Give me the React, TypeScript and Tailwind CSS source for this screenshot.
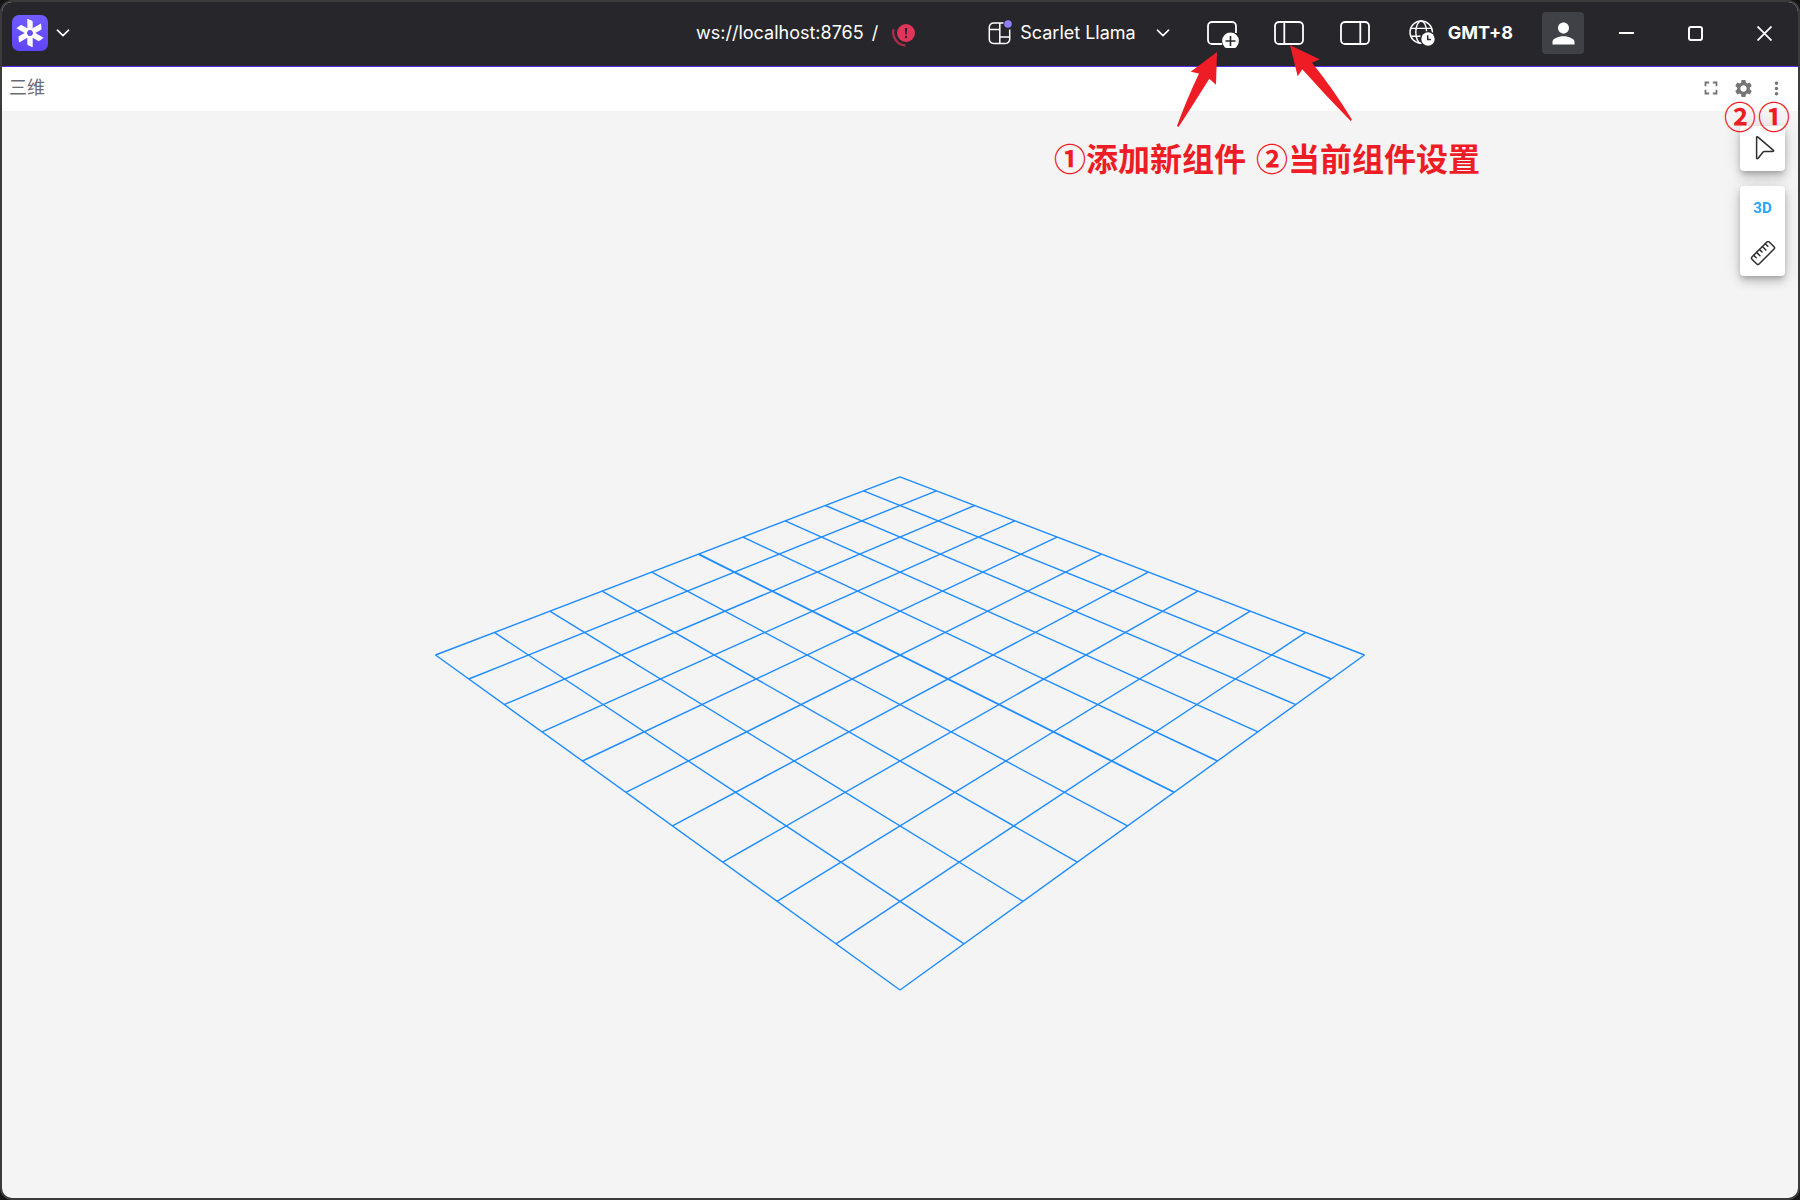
import type { ReactNode } from "react";
import { MdFullscreen, MdMoreVert, MdPerson, MdSettings } from "react-icons/md";

const HALF = 5;

/** Perspective projection of a ground-plane point, relative to the grid's centre. */
function project(a: number, b: number) {
  const u = a + b;
  const v = a - b;
  const depth = 1 - 0.03057 * u;
  return { x: 898 + (46.45 * v) / depth, y: 544 + (23.26 * u) / depth };
}

function GroundGrid() {
  const steps = Array.from({ length: HALF * 2 + 1 }, (_, i) => i - HALF);
  return (
    <svg
      className="absolute inset-0 size-full"
      viewBox="0 0 1796 1087"
      stroke="#1e8cff"
      strokeWidth="1.4"
      aria-hidden="true"
    >
      {steps.map((s) => {
        const p = project(-HALF, s);
        const q = project(HALF, s);
        const r = project(s, -HALF);
        const t = project(s, HALF);
        return (
          <g key={s}>
            <line x1={p.x} y1={p.y} x2={q.x} y2={q.y} strokeWidth={s === 0 ? 1.8 : 1.4} />
            <line x1={r.x} y1={r.y} x2={t.x} y2={t.y} />
          </g>
        );
      })}
    </svg>
  );
}

function Logo() {
  return (
    <svg viewBox="-18 -18 36 36" className="size-9" aria-hidden="true">
      <defs>
        <linearGradient id="logo-fill" x1="0" y1="0" x2="0" y2="1">
          <stop offset="0" stopColor="#6f5cff" />
          <stop offset="1" stopColor="#5f45f7" />
        </linearGradient>
      </defs>
      <rect x="-18" y="-18" width="36" height="36" rx="7" fill="url(#logo-fill)" />
      {[0, 60, 120, 180, 240, 300].map((deg) => (
        <path
          key={deg}
          transform={`rotate(${deg})`}
          d="M-2.7-14.2 1.6-12.4Q2.7-12 2.7-10.8V-4.6L0-2.4-2.7-4.6Z"
          fill="#fff"
        />
      ))}
      <circle r="4.1" fill="none" stroke="#fff" strokeWidth="2.4" />
      <path d="M0-3 2.6-1.5V1.5L0 3-2.6 1.5V-1.5Z" fill="#6650fb" />
    </svg>
  );
}

function Chevron() {
  return (
    <svg viewBox="0 0 14 8" className="h-2 w-3.5" fill="none" stroke="#fff" strokeWidth="1.6" strokeLinecap="round" strokeLinejoin="round" aria-hidden="true">
      <path d="M1.4 1.2 7 6.6l5.6-5.4" />
    </svg>
  );
}

function ProblemsIcon() {
  return (
    <svg viewBox="0 -4 24 28" className="h-7 w-6" aria-hidden="true">
      <circle cx="14" cy="10" r="9" fill="#e0355a" />
      <path d="M12.9 5h2.2l-.4 6.4h-1.4Z" fill="#27272b" />
      <circle cx="14" cy="14" r="1.2" fill="#27272b" />
      <path d="M1.5 6.2C-.2 14 5 22 13.4 22.4" fill="none" stroke="#b02c4c" strokeWidth="2.3" />
    </svg>
  );
}

function LayoutIcon() {
  return (
    <svg viewBox="0 0 24 26" className="h-[26px] w-6" fill="none" stroke="#fff" strokeWidth="1.5" aria-hidden="true">
      <path d="M15.5 3H5.5a4.2 4.2 0 0 0-4.2 4.2v12.1a4.2 4.2 0 0 0 4.2 4.2h12a4.2 4.2 0 0 0 4.2-4.2V9.5" />
      <path d="M11.8 3v20.5M1.3 9.4h10.5M11.8 17h9.9" />
      <circle cx="20" cy="4" r="3.8" fill="#8f7fff" stroke="none" />
    </svg>
  );
}

function AddPanelIcon() {
  return (
    <svg viewBox="0 0 32 30" className="h-[30px] w-8" fill="none" stroke="#fff" strokeWidth="1.8" aria-hidden="true">
      <path d="M15 26H5a4 4 0 0 1-4-4V8a4 4 0 0 1 4-4h20a4 4 0 0 1 4 4v7" />
      <circle cx="23.5" cy="23" r="8.4" fill="#fff" stroke="none" />
      <path d="M23.5 18v10M18.5 23h10" stroke="#27272b" strokeWidth="1.6" />
    </svg>
  );
}

function SidebarIcon({ side }: { side: "left" | "right" }) {
  return (
    <svg viewBox="0 0 30 24" className="h-6 w-[30px]" fill="none" stroke="#fff" strokeWidth="1.8" aria-hidden="true">
      <rect x="1" y="1" width="28" height="22" rx="4" />
      <path d={side === "left" ? "M10.3 1v22" : "M20.3 1v22"} />
    </svg>
  );
}

function TimezoneIcon() {
  return (
    <svg viewBox="0 0 26 26" className="size-[26px]" fill="none" stroke="#fff" strokeWidth="1.4" aria-hidden="true">
      <circle cx="12.2" cy="12.2" r="11.2" />
      <ellipse cx="12.2" cy="12.2" rx="5.4" ry="11.2" />
      <path d="M2.2 8.4h20M2.2 16.2h20" />
      <circle cx="19" cy="19" r="8" fill="#27272b" stroke="none" />
      <circle cx="19" cy="19" r="6.7" fill="#fff" stroke="none" />
      <path d="M18.7 15.2v4.2h3.2" stroke="#27272b" strokeWidth="1.5" />
    </svg>
  );
}

function CursorIcon() {
  return (
    <svg viewBox="0 0 24 26" className="h-[26px] w-6" fill="none" stroke="#2e2e30" strokeWidth="1.5" strokeLinejoin="round" aria-hidden="true">
      <path d="M5.6 1.600v20.500q.4 1.300 1.500.200l5-6.300q.500-.600 1.300-.600h8.300q1.600-.100.500-1.300L7 1.100q-1.300-.800-1.400.500Z" />
    </svg>
  );
}

function RulerIcon() {
  return (
    <svg viewBox="0 1 26 26" className="size-[26px]" fill="none" stroke="#2e2e30" strokeWidth="1.5" strokeLinecap="round" strokeLinejoin="round" aria-hidden="true">
      <g transform="rotate(-45 13 13)">
        <rect x="0.8" y="8" width="24.4" height="10" rx="1.6" />
        <path d="M4.8 8v3.6M8.900 8v4.800M13 8v3.600M17.100 8v4.800M21.200 8v3.600" />
      </g>
    </svg>
  );
}

function BarButton({ label, className, children }: { label: string; className: string; children: ReactNode }) {
  return (
    <button type="button" aria-label={label} className={`flex h-full shrink-0 items-center justify-center ${className}`}>
      {children}
    </button>
  );
}

function TitleBar() {
  return (
    <header className="flex h-[65px] shrink-0 items-center border-b border-[#5a2cf0] bg-[#27272b] pb-0.5 text-lg leading-6 whitespace-nowrap text-white">
      <div className="flex h-full flex-1 items-center">
        <BarButton label="Menu" className="gap-2 pl-2.5">
          <Logo />
          <Chevron />
        </BarButton>
      </div>
      <div className="mr-[72px] flex h-full items-center gap-3.5">
        <div className="flex gap-2">
          <span>ws://localhost:8765</span>
          <span>/</span>
        </div>
        <BarButton label="Problems" className="w-6">
          <ProblemsIcon />
        </BarButton>
      </div>
      <BarButton label="Layout" className="mr-[21px]">
        <LayoutIcon />
        <span className="mr-5 ml-2">Scarlet Llama</span>
        <Chevron />
      </BarButton>
      <BarButton label="Add panel" className="w-[65px]">
        <AddPanelIcon />
      </BarButton>
      <BarButton label="Left sidebar" className="w-[66px]">
        <SidebarIcon side="left" />
      </BarButton>
      <BarButton label="Right sidebar" className="w-[66px]">
        <SidebarIcon side="right" />
      </BarButton>
      <BarButton label="Time zone" className="mr-[29px] ml-[21px] gap-[13px] font-bold">
        <TimezoneIcon />
        <span>GMT+8</span>
      </BarButton>
      <button type="button" aria-label="Account" className="mr-2 flex size-[42px] shrink-0 items-center justify-center rounded bg-[#404147]">
        <MdPerson className="size-[33px]" />
      </button>
      <BarButton label="Minimize" className="w-[69px]">
        <span className="h-0.5 w-[15px] bg-white" />
      </BarButton>
      <BarButton label="Maximize" className="w-[69px]">
        <span className="size-[15px] rounded-[3px] border-2 border-white" />
      </BarButton>
      <BarButton label="Close" className="w-[68px]">
        <svg viewBox="0 0 15 15" className="size-[15px]" stroke="#fff" strokeWidth="1.8" aria-hidden="true">
          <path d="M.5.5l14 14M14.5.5l-14 14" />
        </svg>
      </BarButton>
    </header>
  );
}

function PanelBar() {
  return (
    <div className="flex h-11 shrink-0 items-center bg-white pr-[5px] pb-0.5 pl-[7px] text-[#757575]">
      <h1 className="flex-1 text-lg leading-6 text-[#6c6b75]">三维</h1>
      <BarButton label="Fullscreen" className="w-[33px]">
        <MdFullscreen className="size-[22px]" />
      </BarButton>
      <BarButton label="Settings" className="w-[33px]">
        <MdSettings className="size-[21px]" />
      </BarButton>
      <BarButton label="More" className="w-[33px]">
        <MdMoreVert className="size-[21px]" />
      </BarButton>
    </div>
  );
}

const toolCard =
  "flex flex-col rounded bg-white shadow-[0_3px_5px_-1px_rgba(0,0,0,0.2),0_6px_10px_rgba(0,0,0,0.14),0_1px_18px_rgba(0,0,0,0.12)]";
const toolButton = "flex size-[45px] items-center justify-center";

function ViewTools() {
  return (
    <div className="absolute top-[15px] right-[13px] flex flex-col gap-[15px]">
      <div className={toolCard}>
        <button type="button" aria-label="Select object" className={toolButton}>
          <CursorIcon />
        </button>
      </div>
      <div className={toolCard}>
        <button type="button" className={`${toolButton} font-[Roboto] text-[15px] font-bold text-[#29a3f7]`}>
          3D
        </button>
        <button type="button" aria-label="Measure" className={toolButton}>
          <RulerIcon />
        </button>
      </div>
    </div>
  );
}

function Annotations() {
  return (
    <div className="pointer-events-none absolute inset-0 font-['Noto_Sans_CJK_SC',sans-serif] text-[32px] leading-8 font-bold whitespace-nowrap text-[#ee1c25]">
      <svg viewBox="0 0 180 84" className="absolute top-[43px] right-[444px] h-[84px] w-[180px]" fill="#ee1c25" aria-hidden="true">
        <path d="M43 7 42 39.7 35.3 33.7Q17 63 4.5 82L3 81Q12 56 25 28.5L16.7 26.7Z" />
        <path d="M116 .3 145.7 14.3 138 17.7Q160 45 178 74.7L176.7 76Q152 51 128.3 24.3L123.7 31.3Z" />
      </svg>
      <p className="absolute top-[139px] right-[318px] flex gap-2.5">
        <span>①添加新组件</span>
        <span>②当前组件设置</span>
      </p>
      <p className="absolute top-[97px] right-2 flex gap-0.5">
        <span>②</span>
        <span>①</span>
      </p>
    </div>
  );
}

export default function App() {
  return (
    <div className="flex h-screen flex-col bg-[#151515] font-[Inter,'Noto_Sans_CJK_SC',sans-serif]">
      <div className="relative flex flex-1 flex-col overflow-hidden rounded-xl border-2 border-[#3b3b3c] bg-[#f4f4f4]">
        <TitleBar />
        <PanelBar />
        <main className="relative flex-1">
          <GroundGrid />
          <ViewTools />
        </main>
        <Annotations />
      </div>
    </div>
  );
}
